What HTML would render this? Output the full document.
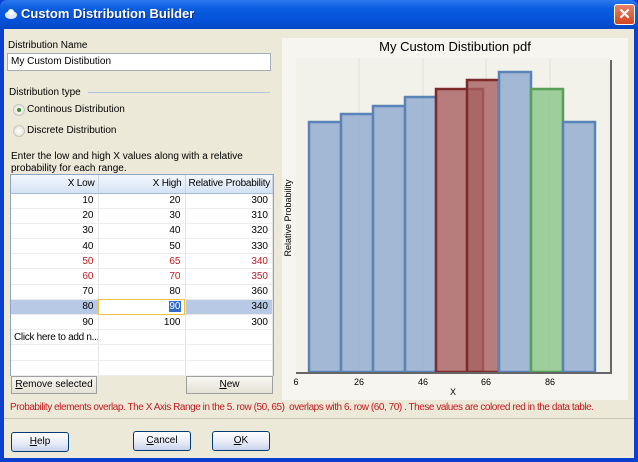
<!DOCTYPE html>
<html><head><style>
*{margin:0;padding:0;box-sizing:border-box}
body{width:638px;height:462px;overflow:hidden;font-family:"Liberation Sans",sans-serif;font-size:10px;color:#000;background:#0a3fd0;position:relative}
.abs{position:absolute;white-space:nowrap}
#title{left:0;top:0;width:638px;height:29px;background:linear-gradient(#2b78ef,#0a5de0 30%,#0552d8 70%,#0446c4);border-radius:7px 7px 0 0}
#title span{position:absolute;left:21px;top:6px;color:#fff;font-weight:bold;font-size:13px;text-shadow:1px 1px #0b2f8a}
#body{left:4px;top:29px;width:630px;height:429px;background:#ece9d8}
.close{left:614px;top:4px;width:21px;height:21px;border:1px solid #fff;border-radius:3px;background:linear-gradient(#e8826a,#d0471f);color:#fff;font-weight:bold;font-size:15px;text-align:center;line-height:19px}
.input{left:7px;top:53px;width:264px;height:18px;background:#fff;border:1px solid #a5acb5;padding:2px 3px}
.radio{width:12px;height:12px;border-radius:50%;border:1px solid #c7c6bd;background:radial-gradient(#fff,#dedbd0)}
table{border-collapse:collapse;position:absolute;left:11px;top:175px;width:262px;background:#fff;table-layout:fixed}
td{height:15.2px;text-align:right;padding:0 4px;border-right:1px solid #e4e4e4;border-bottom:1px solid #ececec;white-space:nowrap;overflow:hidden;line-height:13px}
th{height:18px;font-weight:normal;text-align:right;padding:0 3px;background:linear-gradient(#f4f8fd,#d4e2f6);border-right:1px solid #c8d4e6;border-bottom:1px solid #a8bbd8;white-space:nowrap;letter-spacing:-0.2px}
.r td{color:#c0191e}
.sel td{background:#b8c9e6}
.btn{height:20px;border:1px solid #003c74;border-radius:3px;background:linear-gradient(#fff,#e6eaf6 60%,#c6d1ea);text-align:center;line-height:18px}
.flat{height:18px;border:1px solid #a0a0a0;background:linear-gradient(#f8f7f2,#e4e1d4);text-align:center;line-height:16px}
</style></head><body>
<div class="abs" id="title"><svg class="abs" style="left:4px;top:8px" width="14" height="12"><ellipse cx="7" cy="7" rx="6" ry="4" fill="#dfe8f8"/><circle cx="7" cy="4" r="3" fill="#fff"/></svg><span>Custom Distribution Builder</span></div>
<div class="abs close">✕</div>
<div class="abs" id="body"></div>
<div class="abs" style="left:8px;top:40px">Distribution Name</div>
<div class="abs input">My Custom Distibution</div>
<div class="abs" style="left:9px;top:87px">Distribution type</div>
<div class="abs" style="left:88px;top:92px;width:182px;height:1px;background:#b0c4e0"></div>
<div class="abs radio" style="left:13px;top:104px"><div style="width:4px;height:4px;background:#3a8b3a;border-radius:50%;margin:3px"></div></div>
<div class="abs" style="left:27px;top:104px">Continous Distribution</div>
<div class="abs radio" style="left:13px;top:125px"></div>
<div class="abs" style="left:27px;top:125px">Discrete Distribution</div>
<div class="abs" style="left:11px;top:151px;line-height:12px">Enter the low and high X values along with a relative<br>probability for each range.</div>
<div class="abs" style="left:10px;top:174px;width:264px;height:202px;border:1px solid #8ea6c6;background:#fff"></div>
<table>
<tr><th style="width:87px">X Low</th><th style="width:87px">X High</th><th>Relative Probability</th></tr>
<tr><td>10</td><td>20</td><td>300</td></tr>
<tr><td>20</td><td>30</td><td>310</td></tr>
<tr><td>30</td><td>40</td><td>320</td></tr>
<tr><td>40</td><td>50</td><td>330</td></tr>
<tr class="r"><td>50</td><td>65</td><td>340</td></tr>
<tr class="r"><td>60</td><td>70</td><td>350</td></tr>
<tr><td>70</td><td>80</td><td>360</td></tr>
<tr class="sel"><td>80</td><td style="background:#fff;outline:1px solid #f0c040;outline-offset:-1px"><span style="background:#316ac5;color:#fff">90</span></td><td>340</td></tr>
<tr><td>90</td><td>100</td><td>300</td></tr>
<tr><td style="text-align:left;letter-spacing:-0.3px;padding-left:3px">Click here to add n...</td><td></td><td></td></tr>
<tr><td></td><td></td><td></td></tr>
<tr><td></td><td></td><td></td></tr>
</table>
<div class="abs flat" style="left:11px;top:376px;width:86px"><u>R</u>emove selected</div>
<div class="abs flat" style="left:186px;top:376px;width:87px"><u>N</u>ew</div>
<div class="abs" style="left:10px;top:402px;color:#c0191e;letter-spacing:-0.45px">Probability elements overlap. The X Axis Range in the 5. row (50, 65)&nbsp; overlaps with 6. row (60, 70) . These values are colored red in the data table.</div>
<div class="abs" style="left:4px;top:418px;width:630px;height:1px;background:#c9c6b6"></div>
<div class="abs btn" style="left:11px;top:432px;width:58px"><u>H</u>elp</div>
<div class="abs btn" style="left:133px;top:431px;width:58px"><u>C</u>ancel</div>
<div class="abs btn" style="left:212px;top:431px;width:58px"><u>O</u>K</div>
<svg class="abs" style="left:282px;top:38px" width="346" height="362">
<rect width="346" height="362" fill="#f6f5f0"/>
<rect x="14" y="20" width="315" height="314" fill="#f2f1ea"/>
<g stroke="#e2e0d6"><line x1="77" y1="20" x2="77" y2="334"/><line x1="141" y1="20" x2="141" y2="334"/><line x1="204" y1="20" x2="204" y2="334"/><line x1="268" y1="20" x2="268" y2="334"/></g>
<text x="173" y="13" text-anchor="middle" font-family="Liberation Sans" font-size="13">My Custom Distibution pdf</text>
<g stroke-width="2.5" fill-opacity="0.8">
<rect x="27" y="84" width="32" height="250" fill="#8eaad0" stroke="#5a83b6"/>
<rect x="59" y="76" width="32" height="258" fill="#8eaad0" stroke="#5a83b6"/>
<rect x="91" y="68" width="32" height="266" fill="#8eaad0" stroke="#5a83b6"/>
<rect x="123" y="59" width="31" height="275" fill="#8eaad0" stroke="#5a83b6"/>
<rect x="154" y="51" width="47" height="283" fill="#a86060" stroke="#7c2a2a"/>
<rect x="185" y="42" width="32" height="292" fill="#a86060" stroke="#7c2a2a"/>
<rect x="217" y="34" width="32" height="300" fill="#8eaad0" stroke="#5a83b6"/>
<rect x="249" y="51" width="32" height="283" fill="#8ac68a" stroke="#58a058"/>
<rect x="281" y="84" width="32" height="250" fill="#8eaad0" stroke="#5a83b6"/>
</g>
<line x1="14" y1="335" x2="330" y2="335" stroke="#666" stroke-width="2"/>
<line x1="329" y1="22" x2="329" y2="336" stroke="#666" stroke-width="2"/>
<g font-family="Liberation Sans" font-size="9" text-anchor="middle"><text x="14" y="347">6</text><text x="77" y="347">26</text><text x="141" y="347">46</text><text x="204" y="347">66</text><text x="268" y="347">86</text><text x="171" y="357">X</text></g>
<text transform="translate(9,180) rotate(-90)" text-anchor="middle" font-family="Liberation Sans" font-size="9">Relative Probability</text>
</svg>
</body></html>
